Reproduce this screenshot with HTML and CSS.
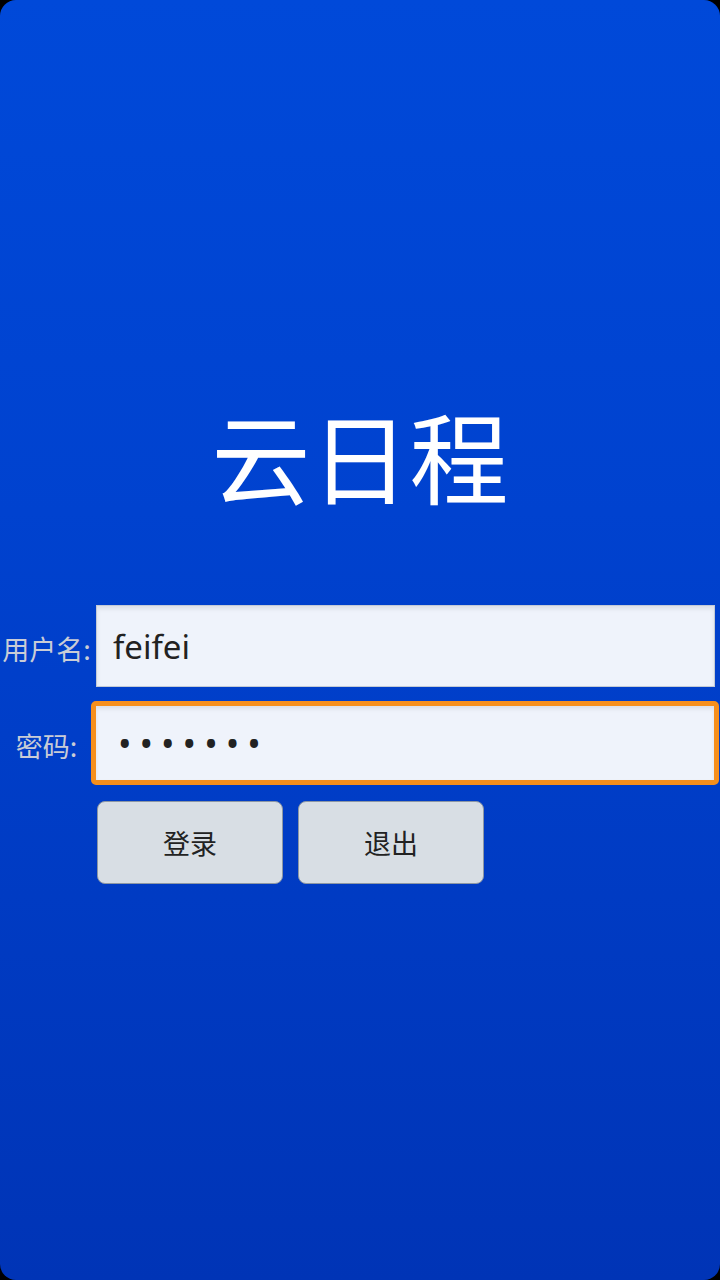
FILE: index.html
```html
<!DOCTYPE html>
<html>
<head>
    <meta charset="utf-8">
    <title>云日程</title>
    <link rel="stylesheet" href="styles.css">
</head>
<body>
    <div class="screen">
        <h1 class="title">云日程</h1>

        <form class="login_form">
            <label class="field_label" for="username">用户名:</label>
            <input class="field_input" id="username" type="text" value="feifei">

            <label class="field_label" for="password">密码:</label>
            <input class="field_input field_focused" id="password" type="password" value="1234567">

            <div class="buttons">
                <button class="btn" type="button">登录</button>
                <button class="btn" type="button">退出</button>
            </div>
        </form>
    </div>
</body>
</html>
```

FILE: styles.css
```css
body {
    margin: 0;
    padding: 0;
    background-color: #000;
    font-family: "Noto Sans", "Noto Sans CJK SC", sans-serif;
}

.screen {
    height: 1280px;
    box-sizing: border-box;
    padding-top: 405px;
    border-radius: 16px;
    overflow: hidden;
    background: linear-gradient(180deg, #0049d9 0%, #0042cf 40%, #003bc3 70%, #0034b6 100%);
    display: flex;
    flex-direction: column;
}

.title {
    margin: 0;
    font-family: "Noto Sans CJK SC", sans-serif;
    font-weight: normal;
    font-size: 99px;
    line-height: 99px;
    color: #fff;
    text-align: center;
}

.login_form {
    margin-top: 101px;
    display: grid;
    grid-template-columns: 96px 619px;
    row-gap: 14px;
    align-items: center;
}

.field_label {
    font-family: "Noto Sans CJK SC", sans-serif;
    font-size: 27px;
    color: #c9ccd6;
    text-align: center;
    padding-right: 3px;
    padding-top: 5px;
}

.field_input {
    box-sizing: border-box;
    height: 82px;
    width: 619px;
    margin: 0;
    padding: 0 16px;
    border: 1px solid #c3cad6;
    background-color: #eff3fb;
    box-shadow: inset 0 3px 4px rgba(0, 0, 0, 0.08);
    font-family: "Noto Sans", sans-serif;
    font-size: 33px;
    color: #222;
    outline: none;
}

.field_focused {
    height: 84px;
    width: 628px;
    margin-left: -5px;
    padding-left: 22px;
    border: 5px solid #f68f1c;
    border-radius: 5px;
    letter-spacing: 8px;
    font-size: 36px;
}

.buttons {
    grid-column: 2;
    margin-top: 2px;
    padding-left: 1px;
    display: flex;
    gap: 15px;
}

.btn {
    width: 186px;
    height: 83px;
    padding: 0;
    border: 1px solid #8c97a4;
    border-radius: 8px;
    background-color: #d8dee4;
    font-family: "Noto Sans CJK SC", sans-serif;
    font-size: 27px;
    color: #222;
    cursor: pointer;
}
```
